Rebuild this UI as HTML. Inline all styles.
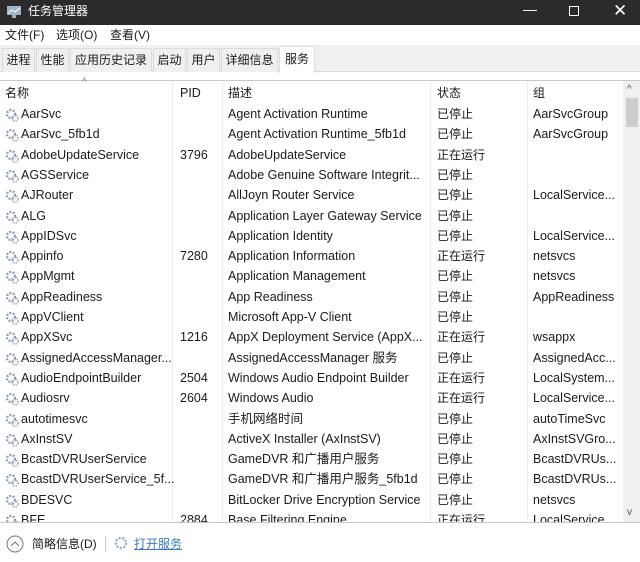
<!DOCTYPE html>
<html><head><meta charset="utf-8"><style>
*{margin:0;padding:0;box-sizing:border-box}
body{width:640px;height:562px;overflow:hidden;background:#fff;font-family:"Liberation Sans","Noto Sans CJK SC",sans-serif;font-size:12.5px;line-height:15px;color:#1a1a1a;position:relative}
.t{position:absolute;white-space:nowrap;line-height:15px}
#title{position:absolute;left:0;top:0;width:640px;height:25px;background:#2b2b2b;color:#fff}
#menu{position:absolute;top:25px;left:0;width:640px;height:20px;background:#fff}
#tabs{position:absolute;top:45px;left:0;width:640px;height:27px;background:#f0f0f0;border-bottom:1px solid #d9d9d9}
.tab{position:absolute;top:3px;height:24px;background:#f0f0f0;border:1px solid #dcdcdc;border-bottom:none;line-height:22px;font-size:12px;white-space:nowrap;overflow:hidden;text-align:center}
#hdr{position:absolute;top:80px;left:0;width:640px;height:24px;border-top:1px solid #c8c8c8}
.sep{position:absolute;top:81px;width:1px;height:441px;background:#ececec}
.row{position:absolute;left:0;width:624px;height:20px;overflow:hidden}
.row span{position:absolute;top:3px;white-space:nowrap;line-height:15px;height:15px}
.ic{position:absolute;left:5px;top:4px;width:14px;height:14px}
#foot{position:absolute;top:522px;left:0;width:640px;height:40px;border-top:1px solid #c8c8c8;background:#fff}
</style></head><body>
<div id="title">
<svg style="position:absolute;left:6px;top:5px" width="16" height="14"><rect x="1" y="1" width="14" height="9" fill="#9fb6c8"/><polyline points="2,8 6,5 9,7 14,3" stroke="#fff" fill="none"/><rect x="6" y="10" width="4" height="3" fill="#9fb6c8"/></svg>
<div class="t" style="left:28px;top:4px;font-size:12px">任务管理器</div>
<div class="t" style="left:523px;top:2px;font-size:14px">—</div>
<div style="position:absolute;left:569px;top:6px;width:10px;height:10px;border:1px solid #fff"></div>
<div class="t" style="left:613px;top:3px;font-size:17px">✕</div>
</div>
<div id="menu">
<div class="t" style="left:5px;top:3px;font-size:12px">文件(F)</div>
<div class="t" style="left:56px;top:3px;font-size:12px">选项(O)</div>
<div class="t" style="left:110px;top:3px;font-size:12px">查看(V)</div>
</div>
<div id="tabs">
<div class="tab" style="left:2px;width:33px">进程</div>
<div class="tab" style="left:36px;width:33px">性能</div>
<div class="tab" style="left:70px;width:82px">应用历史记录</div>
<div class="tab" style="left:153px;width:33px">启动</div>
<div class="tab" style="left:187px;width:33px">用户</div>
<div class="tab" style="left:221px;width:57px">详细信息</div>
<div class="tab" style="left:279px;width:36px;background:#fff;top:1px;height:27px;line-height:24px">服务</div>
</div>
<div id="hdr">
<div class="t" style="left:82px;top:-6px;font-size:10px;color:#777">^</div>
<div class="t" style="left:5px;top:5px;font-size:12px">名称</div>
<div class="t" style="left:180px;top:5px">PID</div>
<div class="t" style="left:228px;top:5px;font-size:12px">描述</div>
<div class="t" style="left:437px;top:5px;font-size:12px">状态</div>
<div class="t" style="left:533px;top:5px;font-size:12px">组</div>
</div>
<div class="sep" style="left:172px"></div>
<div class="sep" style="left:222px"></div>
<div class="sep" style="left:430px"></div>
<div class="sep" style="left:527px"></div>
<div style="position:absolute;left:623px;top:81px;width:17px;height:441px;background:#f0f0f0"></div>
<div class="t" style="left:627px;top:82px;font-size:10px;color:#555">^</div>
<div style="position:absolute;left:626px;top:98px;width:12px;height:29px;background:#cdcdcd"></div>
<div class="t" style="left:627px;top:505px;font-size:10px;color:#555">v</div>
<div id="rows"></div>
<div id="foot">
<svg style="position:absolute;left:6px;top:12px" width="18" height="18"><circle cx="9" cy="9" r="8" fill="none" stroke="#777"/><polyline points="5,11 9,7 13,11" fill="none" stroke="#777"/></svg>
<div class="t" style="left:32px;top:14px;font-size:12px">简略信息(D)</div>
<div style="position:absolute;left:105px;top:13px;width:1px;height:16px;background:#ccc"></div>
<svg style="position:absolute;left:114px;top:13px" width="15" height="15"><circle cx="7" cy="7" r="5" fill="none" stroke="#9ab" stroke-width="2.5" stroke-dasharray="2 1.5"/><circle cx="7" cy="7" r="2" fill="#fff"/></svg>
<div class="t" style="left:134px;top:14px;font-size:12px;color:#3a78c2;text-decoration:underline">打开服务</div>
</div>
<script>
var d=[["AarSvc","","Agent Activation Runtime","已停止","AarSvcGroup"],
["AarSvc_5fb1d","","Agent Activation Runtime_5fb1d","已停止","AarSvcGroup"],
["AdobeUpdateService","3796","AdobeUpdateService","正在运行",""],
["AGSService","","Adobe Genuine Software Integrit...","已停止",""],
["AJRouter","","AllJoyn Router Service","已停止","LocalService..."],
["ALG","","Application Layer Gateway Service","已停止",""],
["AppIDSvc","","Application Identity","已停止","LocalService..."],
["Appinfo","7280","Application Information","正在运行","netsvcs"],
["AppMgmt","","Application Management","已停止","netsvcs"],
["AppReadiness","","App Readiness","已停止","AppReadiness"],
["AppVClient","","Microsoft App-V Client","已停止",""],
["AppXSvc","1216","AppX Deployment Service (AppX...","正在运行","wsappx"],
["AssignedAccessManager...","","AssignedAccessManager 服务","已停止","AssignedAcc..."],
["AudioEndpointBuilder","2504","Windows Audio Endpoint Builder","正在运行","LocalSystem..."],
["Audiosrv","2604","Windows Audio","正在运行","LocalService..."],
["autotimesvc","","手机网络时间","已停止","autoTimeSvc"],
["AxInstSV","","ActiveX Installer (AxInstSV)","已停止","AxInstSVGro..."],
["BcastDVRUserService","","GameDVR 和广播用户服务","已停止","BcastDVRUs..."],
["BcastDVRUserService_5f...","","GameDVR 和广播用户服务_5fb1d","已停止","BcastDVRUs..."],
["BDESVC","","BitLocker Drive Encryption Service","已停止","netsvcs"],
["BFE","2884","Base Filtering Engine","正在运行","LocalService..."]];
var h="";d.forEach(function(r,i){var y=104+i*20.3;
h+='<div class="row" style="top:'+y+'px;'+(i==20?'height:18px;':'')+'"><svg class="ic" viewBox="0 0 14 14"><circle cx="6" cy="6" r="4" fill="none" stroke="#8a9bb0" stroke-width="2.2" stroke-dasharray="2 1.4"/><circle cx="10" cy="10" r="3" fill="none" stroke="#a8b5c4" stroke-width="1.8" stroke-dasharray="1.5 1"/></svg>'+
'<span style="left:21px">'+r[0]+'</span><span style="left:180px">'+r[1]+'</span><span style="left:228px">'+r[2]+'</span><span style="left:437px;font-size:12px">'+r[3]+'</span><span style="left:533px">'+r[4]+'</span></div>';});
document.getElementById("rows").innerHTML=h;
</script>
</body></html>
